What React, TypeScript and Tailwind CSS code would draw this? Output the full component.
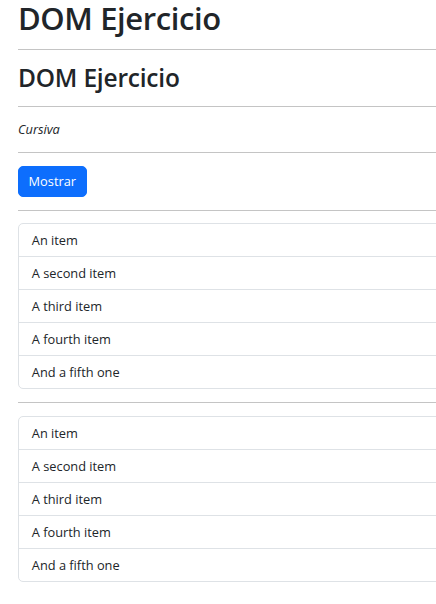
const items: string[] = [
  "An item",
  "A second item",
  "A third item",
  "A fourth item",
  "And a fifth one",
];

function ItemList() {
  return (
    <ul className="flex flex-col rounded-[5px] border border-[#dee2e6]">
      {items.map((item, index) => (
        <li
          key={index}
          className={`h-[32px] px-[12.8px] text-[12.8px] leading-[32px] ${
            index > 0 ? "h-[33px] border-t border-[#dee2e6]" : ""
          }`}
        >
          {item}
        </li>
      ))}
    </ul>
  );
}

function Divider({ bottom = "mb-[13px]" }: { bottom?: string }) {
  return <hr className={`mt-[13px] ${bottom} border-0 border-t border-[#c4c4c4]`} />;
}

export default function App() {
  return (
    <div
      className="w-[436px] h-[604px] overflow-hidden bg-white text-[#212529]"
      style={{ fontFamily: '"Open Sans", "Noto Sans", sans-serif' }}
    >
      <div className="ml-[18px] w-[500px]">
        <h1 className="text-[31px] leading-[36px] font-semibold tracking-[-0.4px]">
          DOM Ejercicio
        </h1>
        <Divider />
        <h2 className="text-[24.5px] leading-[30px] font-semibold tracking-[-0.2px]">
          DOM Ejercicio
        </h2>
        <Divider />
        <p className="text-[12.8px] leading-[19px] italic">Cursiva</p>
        <Divider />
        <button className="h-[31px] rounded-[5px] border border-[#0d6efd] bg-[#0d6efd] px-[9.6px] text-[12.8px] text-white">
          Mostrar
        </button>
        <Divider bottom="mb-[12px]" />
        <ItemList />
        <Divider />
        <ItemList />
      </div>
    </div>
  );
}
